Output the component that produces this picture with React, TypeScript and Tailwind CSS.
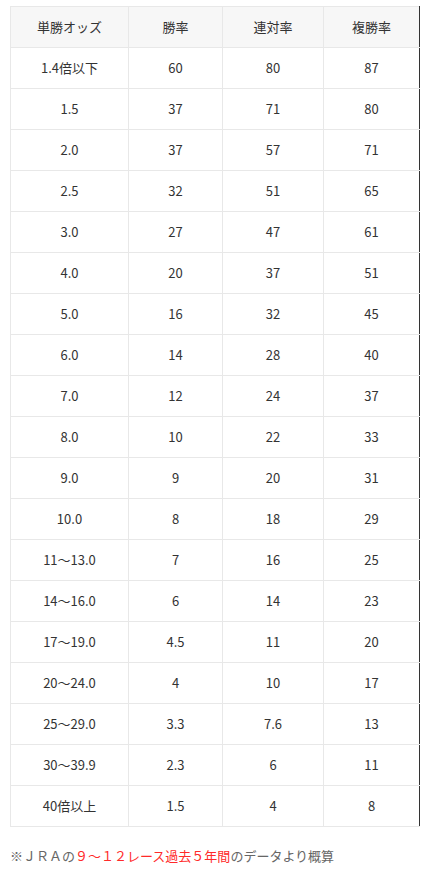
const rows: string[][] = [
  ["1.4倍以下", "60", "80", "87"],
  ["1.5", "37", "71", "80"],
  ["2.0", "37", "57", "71"],
  ["2.5", "32", "51", "65"],
  ["3.0", "27", "47", "61"],
  ["4.0", "20", "37", "51"],
  ["5.0", "16", "32", "45"],
  ["6.0", "14", "28", "40"],
  ["7.0", "12", "24", "37"],
  ["8.0", "10", "22", "33"],
  ["9.0", "9", "20", "31"],
  ["10.0", "8", "18", "29"],
  ["11〜13.0", "7", "16", "25"],
  ["14〜16.0", "6", "14", "23"],
  ["17〜19.0", "4.5", "11", "20"],
  ["20〜24.0", "4", "10", "17"],
  ["25〜29.0", "3.3", "7.6", "13"],
  ["30〜39.9", "2.3", "6", "11"],
  ["40倍以上", "1.5", "4", "8"],
]

const headers = ["単勝オッズ", "勝率", "連対率", "複勝率"]

export default function App() {
  return (
    <div
      className="bg-white text-[#333] text-[13px] pl-[10px] pt-[6px]"
      style={{ fontFamily: '"Noto Sans CJK JP", "Noto Sans", sans-serif' }}
    >
      <table className="border-collapse w-[409px] table-fixed">
        <colgroup>
          <col className="w-[118px]" />
          <col className="w-[94px]" />
          <col className="w-[101px]" />
          <col className="w-[96px]" />
        </colgroup>
        <thead>
          <tr className="h-[41px] bg-[#f7f7f7]">
            {headers.map((h, i) => (
              <th
                key={h}
                className={
                  i === 3
                    ? "border border-[#e8e8e8] border-r-[#333] font-normal text-center p-0"
                    : "border border-[#e8e8e8] font-normal text-center p-0"
                }
              >
                {h}
              </th>
            ))}
          </tr>
        </thead>
        <tbody>
          {rows.map(r => (
            <tr key={r[0]} className="h-[41px]">
              {r.map((c, i) => (
                <td
                  key={i}
                  className={
                    i === 3
                      ? "border border-[#e8e8e8] border-r-[#333] text-center p-0"
                      : "border border-[#e8e8e8] text-center p-0"
                  }
                >
                  {c}
                </td>
              ))}
            </tr>
          ))}
        </tbody>
      </table>
      <p className="mt-[19px] text-[#666]">
        ※ＪＲＡの<span className="text-[#ff2a2a]">９～１２レース過去５年間</span>のデータより概算
      </p>
    </div>
  )
}
